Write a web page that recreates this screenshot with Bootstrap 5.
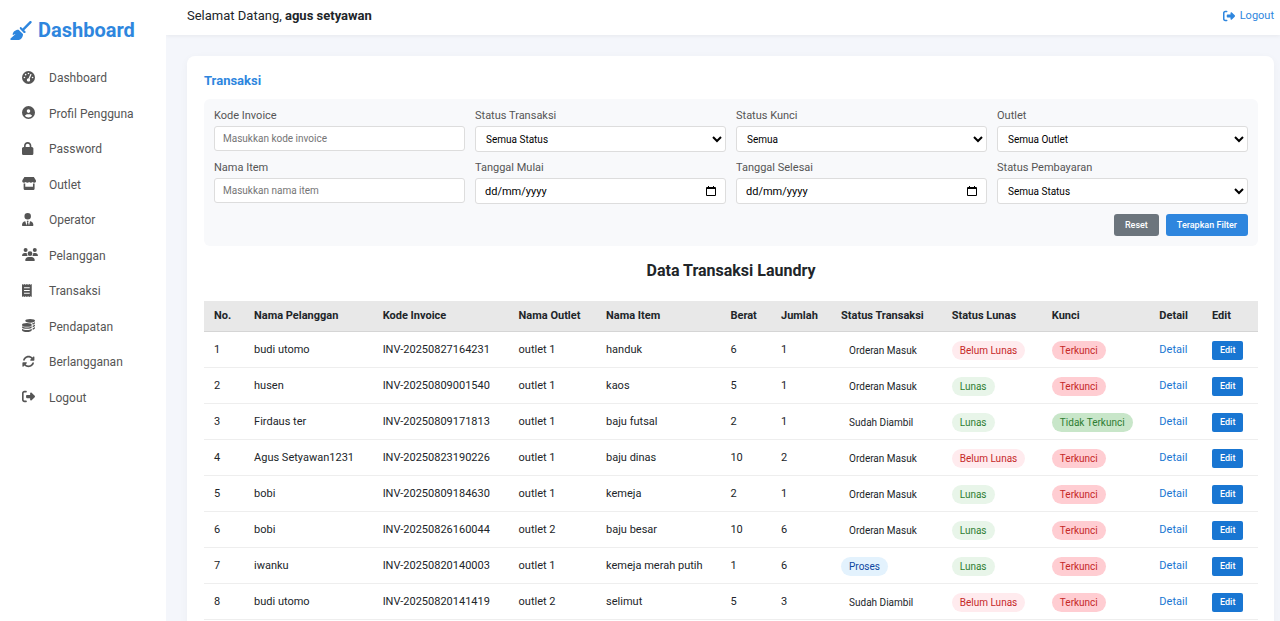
<!DOCTYPE html>
<html lang="id">
<head>
<meta charset="utf-8">
<meta name="viewport" content="width=device-width, initial-scale=1">
<title>Transaksi</title>
<link href="https://cdn.jsdelivr.net/npm/bootstrap@5.3.0/dist/css/bootstrap.min.css" rel="stylesheet">
<style>
body{font-family:Roboto,"Liberation Sans",sans-serif;font-size:12px;line-height:16px;color:#212529;background:#f4f6fb}
a{text-decoration:none}
svg{fill:currentColor}
.side-panel{width:166px;flex:none;background:#fff}
.brand-link{color:#2e86de;font-size:20px;line-height:28px;font-weight:700;padding:16px 10px 18px;gap:6px}
.side-nav{min-height:352px}
.side-link{color:#555;height:32px;padding-left:22px;gap:11px}
.side-icon{width:16px;height:13px;flex:none;overflow:visible;margin-bottom:2px}
.top-strip{height:35px;background:#fff;padding:0 6px 4px 21px;font-size:13px;box-shadow:0 1px 4px rgba(0,0,0,.06)}
.top-strip a{color:#2e86de;font-size:11px;gap:5px}
.panel-card{margin:21px 6px 0 21px;padding:16px 16px 16px 17px;background:#fff;border-radius:8px;box-shadow:0 2px 8px rgba(0,0,0,.04)}
.panel-title{color:#2e86de;font-size:13px;line-height:18px;font-weight:700;margin-bottom:9px}
.filter-box{background:#f8f9fb;border-radius:6px;padding:9px 10px 10px}
.filter-box label{display:block;color:#555;font-size:11px;line-height:16px;margin-bottom:2px}
.filter-row{--bs-gutter-x:10px;--bs-gutter-y:8px}
.filter-actions{margin-top:10px;gap:7px}
.field{display:block;width:100%;height:26px;border:1px solid #ddd;border-radius:3px;background:#fff;color:#000;font-size:10px;padding:0 8px}
.field-text{height:25px}
.field-select{padding:0 6px}
.field::placeholder{color:#757575}
.field-date::placeholder{color:#000}
.field-date{font-size:11px;padding:0 9px}
.date-icon{position:absolute;right:10px;top:8px;width:10px;height:10px;padding:0;border:0;background:none;line-height:0;color:#000}
.act-btn{height:22px;border:0;border-radius:3px;color:#fff;font-size:9px;line-height:12px;font-weight:500;padding:0 11px}
.act-grey{background:#6c757d}.act-blue{background:#2e86de}
.data-title{font-size:16px;line-height:24px;font-weight:700;margin:13px 0 18px;text-align:center}
.trx-table{width:100%;table-layout:fixed;white-space:nowrap;font-size:11px}
.trx-table th{background:#e8e8e8;height:30px;border-bottom:1px solid #d5d5d5;padding:0 10px;font-weight:700}
.trx-table td{height:36px;border-bottom:1px solid #eee;padding:2px 10px 0}
.trx-table a{color:#1976d2}
.pill{display:inline-block;height:19px;line-height:19px;border-radius:10px;padding:0 8px;font-size:10px;vertical-align:middle}
.pill-red{background:#ffebee;color:#c62828}.pill-green{background:#e8f5e9;color:#2e7d32}
.pill-blue{background:#e3f2fd;color:#0d47a1}.pill-lock{background:#ffcdd2;color:#c62828}.pill-open{background:#c8e6c9;color:#2e7d32}
.edit-btn{height:19px;border:0;border-radius:2px;background:#1976d2;color:#fff;font-size:9px;font-weight:500;line-height:12px;padding:0 8px;vertical-align:middle}
</style>
</head>
<body>
<svg class="d-none" xmlns="http://www.w3.org/2000/svg">
<symbol id="i-out" viewBox="0 0 512 512"><path d="M377.9 105.9L500.7 228.7c7.2 7.2 11.3 17.1 11.3 27.3s-4.1 20.1-11.3 27.3L377.9 406.1c-6.4 6.4-15 9.9-24 9.9c-18.7 0-33.9-15.2-33.9-33.9l0-62.1-128 0c-17.7 0-32-14.3-32-32l0-64c0-17.7 14.3-32 32-32l128 0 0-62.1c0-18.7 15.2-33.9 33.9-33.9c9 0 17.6 3.6 24 9.9zM160 96L96 96c-17.7 0-32 14.3-32 32l0 256c0 17.7 14.3 32 32 32l64 0c17.7 0 32 14.3 32 32s-14.3 32-32 32l-64 0c-53 0-96-43-96-96L0 128C0 75 43 32 96 32l64 0c17.7 0 32 14.3 32 32s-14.3 32-32 32z"/></symbol>
</svg>
<div class="d-flex min-vh-100">
<aside class="side-panel">
<a href="#" class="brand-link d-flex align-items-center"><svg width="22" height="19" viewBox="0 0 576 512"><path d="M566.6 54.6c12.5-12.5 12.5-32.8 0-45.3s-32.8-12.5-45.3 0l-192 192-34.7-34.7c-4.2-4.2-10-6.6-16-6.6c-12.5 0-22.6 10.1-22.6 22.6l0 29.1L364.3 320l29.1 0c12.5 0 22.6-10.1 22.6-22.6c0-6-2.4-11.8-6.6-16l-34.7-34.7 192-192zM341.1 353.4L222.6 234.9c-42.7-3.7-85.2 11.7-115.8 42.3l-8 8C76.5 307.5 64 337.7 64 369.2c0 6.8 7.1 11.2 13.2 8.2l51.1-25.5c5-2.5 9.5 4.1 5.4 7.9L7.3 473.4C2.7 477.6 0 483.6 0 489.9C0 502.1 9.9 512 22.1 512l173.3 0c38.8 0 75.9-15.4 103.4-42.8c30.6-30.6 45.9-73.1 42.3-115.8z"/></svg><span>Dashboard</span></a>
<nav class="side-nav d-flex flex-column justify-content-between" aria-label="Menu utama">
<a href="#" class="side-link d-flex align-items-center"><svg class="side-icon" viewBox="0 0 512 512" preserveAspectRatio="xMinYMid"><path fill-rule="evenodd" d="M0 256a256 256 0 1 1 512 0a256 256 0 1 1-512 0zm288-160a32 32 0 1 0-64 0a32 32 0 1 0 64 0zM256 416c35 0 64-29 64-64 0-17-7-33-18-45l69-158c6-12 0-26-12-31s-26 0-32 12l-69 158c-37 0-66 28-66 64s29 64 64 64zM176 144a32 32 0 1 0-64 0a32 32 0 1 0 64 0zM96 288a32 32 0 1 0 0-64a32 32 0 1 0 0 64zm352-32a32 32 0 1 0-64 0a32 32 0 1 0 64 0z"/></svg><span>Dashboard</span></a>
<a href="#" class="side-link d-flex align-items-center"><svg class="side-icon" viewBox="0 0 512 512" preserveAspectRatio="xMinYMid"><path d="M399 384.2C376.9 345.8 335.4 320 288 320l-64 0c-47.4 0-88.9 25.8-111 64.2c35.2 39.2 86.2 63.8 143 63.8s107.8-24.7 143-63.8zM0 256a256 256 0 1 1 512 0A256 256 0 1 1 0 256zm256 16a72 72 0 1 0 0-144 72 72 0 1 0 0 144z"/></svg><span>Profil Pengguna</span></a>
<a href="#" class="side-link d-flex align-items-center"><svg class="side-icon" viewBox="0 0 448 512" preserveAspectRatio="xMinYMid"><path d="M144 144l0 48 160 0 0-48c0-44.2-35.8-80-80-80s-80 35.8-80 80zM80 192l0-48C80 64.5 144.5 0 224 0s144 64.5 144 144l0 48 16 0c35.3 0 64 28.7 64 64l0 192c0 35.3-28.7 64-64 64L64 512c-35.3 0-64-28.7-64-64L0 256c0-35.3 28.7-64 64-64l16 0z"/></svg><span>Password</span></a>
<a href="#" class="side-link d-flex align-items-center"><svg class="side-icon" viewBox="0 0 560 512" preserveAspectRatio="xMinYMid"><path d="M110 0h340c12 0 22 6 28 16l62 98c30 50 0 112-55 112-28 0-52-12-68-32-34 42-96 42-136 0-34 42-102 42-136 0-16 20-42 32-68 32-56 0-88-62-56-112L82 16c6-10 16-16 28-16zM64 256c22 4 44 2 64-4v132h304V252c22 6 42 8 64 4v192c0 36-28 64-64 64H128c-36 0-64-28-64-64z"/></svg><span>Outlet</span></a>
<a href="#" class="side-link d-flex align-items-center"><svg class="side-icon" viewBox="0 0 448 512" preserveAspectRatio="xMinYMid"><path d="M96 128a128 128 0 1 0 256 0a128 128 0 1 0-256 0zM209 360l-20-33c-7-11 1-23 13-23h44c12 0 20 12 13 23l-20 33 36 135 40-158c2-9 11-15 20-12 66 17 113 76 113 146 0 24-15 41-35 41H35c-20 0-35-17-35-41 0-70 47-129 113-146 9-3 18 3 20 12l40 158z"/></svg><span>Operator</span></a>
<a href="#" class="side-link d-flex align-items-center"><svg class="side-icon" viewBox="0 0 640 512" preserveAspectRatio="xMinYMid"><path d="M144 0a80 80 0 1 1 0 160a80 80 0 1 1 0-160zm368 0a80 80 0 1 1 0 160a80 80 0 1 1 0-160zM0 299c0-59 48-107 107-107h42c16 0 31 4 45 10-8 44 8 88 41 118H21c-12 0-21-10-21-21zm405 21c33-30 49-74 41-118 14-6 29-10 45-10h42c59 0 107 48 107 107 0 11-9 21-21 21zM224 224a96 96 0 1 1 192 0a96 96 0 1 1-192 0zm-96 261c0-74 60-133 133-133h118c73 0 133 59 133 133 0 15-12 27-27 27H155c-15 0-27-12-27-27z"/></svg><span>Pelanggan</span></a>
<a href="#" class="side-link d-flex align-items-center"><svg class="side-icon" viewBox="0 0 384 512" preserveAspectRatio="xMinYMid"><path fill-rule="evenodd" d="M0 0l48 34L96 0l48 34L192 0l48 34L288 0l48 34L384 0V512l-48-34-48 34-48-34-48 34-48-34-48 34-48-34-48 34zM80 128v40h224v-40zM80 236v40h224v-40zM80 344v40h224v-40z"/></svg><span>Transaksi</span></a>
<a href="#" class="side-link d-flex align-items-center"><svg class="side-icon" viewBox="0 0 512 512" preserveAspectRatio="xMinYMid"><ellipse cx="320" cy="72" rx="192" ry="72"/><ellipse cx="192" cy="232" rx="192" ry="76"/><path d="M0 286c70 66 314 66 384 0v34c0 82-384 82-384 0zM0 384c70 66 314 66 384 0v48c0 106-384 106-384 0zM390 168c48-8 94-24 122-54v40c0 34-40 56-94 66-4-20-14-38-28-52zM420 264c36-8 70-22 92-44v36c0 34-40 56-92 66zM420 362c36-8 70-22 92-44v36c0 34-40 56-92 66z"/></svg><span>Pendapatan</span></a>
<a href="#" class="side-link d-flex align-items-center"><svg class="side-icon" viewBox="0 0 512 512" preserveAspectRatio="xMinYMid"><path d="M142.9 142.9c62.2-62.2 162.7-62.5 225.3-1L327 183c-6.9 6.9-8.9 17.2-5.2 26.2s12.5 14.8 22.2 14.8l120 0c13.3 0 24-10.7 24-24l0-120c0-9.7-5.8-18.5-14.8-22.2s-19.3-1.7-26.2 5.2L413.4 96.6c-87.6-86.5-228.7-86.2-315.8 1C73.2 122 55.6 150.7 44.8 181.4c-5.9 16.7 2.9 34.9 19.5 40.8s34.9-2.9 40.8-19.5c7.7-21.8 20.2-42.3 37.8-59.8zM16 312L16 440c0 9.7 5.8 18.5 14.8 22.2s19.3 1.7 26.2-5.2l41.6-41.6c87.6 86.5 228.7 86.2 315.8-1c24.4-24.4 42.1-53.1 52.9-83.8c5.9-16.7-2.9-34.9-19.5-40.8s-34.9 2.9-40.8 19.5c-7.7 21.8-20.2 42.3-37.8 59.8c-62.2 62.2-162.7 62.5-225.3 1L185 329c6.9-6.9 8.9-17.2 5.2-26.2s-12.5-14.8-22.2-14.8L40 288c-13.3 0-24 10.7-24 24z"/></svg><span>Berlangganan</span></a>
<a href="#" class="side-link d-flex align-items-center"><svg class="side-icon" viewBox="0 0 512 512" preserveAspectRatio="xMinYMid"><use href="#i-out" width="512" height="512"/></svg><span>Logout</span></a>
</nav>
</aside>
<div class="flex-grow-1 overflow-hidden">
<header class="top-strip d-flex justify-content-between align-items-center"><div>Selamat Datang, <strong>agus setyawan</strong></div><a href="#" class="d-flex align-items-center"><svg width="12" height="12"><use href="#i-out"/></svg>Logout</a></header>
<main class="panel-card">
<h1 class="panel-title">Transaksi</h1>
<form class="filter-box">
<div class="row row-cols-4 filter-row">
<div><label for="kode">Kode Invoice</label><input id="kode" type="text" class="field field-text" placeholder="Masukkan kode invoice"></div>
<div><label for="st">Status Transaksi</label><select id="st" class="field field-select"><option>Semua Status</option></select></div>
<div><label for="sk">Status Kunci</label><select id="sk" class="field field-select"><option>Semua</option></select></div>
<div><label for="ou">Outlet</label><select id="ou" class="field field-select"><option>Semua Outlet</option></select></div>
<div><label for="ni">Nama Item</label><input id="ni" type="text" class="field field-text" placeholder="Masukkan nama item"></div>
<div><label for="tm">Tanggal Mulai</label><div class="position-relative"><input id="tm" type="text" inputmode="numeric" class="field field-date" placeholder="dd/mm/yyyy"><button type="button" class="date-icon" aria-label="Pilih tanggal mulai"><svg width="10" height="10" viewBox="0 0 10 10"><path fill-rule="evenodd" d="M1 1h1V0h1v1h4V0h1v1h1q1 0 1 1v7q0 1-1 1H1q-1 0-1-1V2q0-1 1-1zM1 3v6h8V3z"/></svg></button></div></div>
<div><label for="ts">Tanggal Selesai</label><div class="position-relative"><input id="ts" type="text" inputmode="numeric" class="field field-date" placeholder="dd/mm/yyyy"><button type="button" class="date-icon" aria-label="Pilih tanggal selesai"><svg width="10" height="10" viewBox="0 0 10 10"><path fill-rule="evenodd" d="M1 1h1V0h1v1h4V0h1v1h1q1 0 1 1v7q0 1-1 1H1q-1 0-1-1V2q0-1 1-1zM1 3v6h8V3z"/></svg></button></div></div>
<div><label for="sp">Status Pembayaran</label><select id="sp" class="field field-select"><option>Semua Status</option></select></div>
</div>
<div class="filter-actions d-flex justify-content-end"><button type="reset" class="act-btn act-grey">Reset</button><button type="submit" class="act-btn act-blue">Terapkan Filter</button></div>
</form>
<h2 class="data-title">Data Transaksi Laundry</h2>
<table class="trx-table">
<colgroup><col style="width:3.8%"><col style="width:12.2%"><col style="width:12.9%"><col style="width:8.3%"><col style="width:11.8%"><col style="width:4.8%"><col style="width:5.7%"><col style="width:10.5%"><col style="width:9.5%"><col style="width:10.2%"><col style="width:5%"><col style="width:5.3%"></colgroup>
<thead><tr><th>No.</th><th>Nama Pelanggan</th><th>Kode Invoice</th><th>Nama Outlet</th><th>Nama Item</th><th>Berat</th><th>Jumlah</th><th>Status Transaksi</th><th>Status Lunas</th><th>Kunci</th><th>Detail</th><th>Edit</th></tr></thead>
<tbody>
<tr><td>1</td><td>budi utomo</td><td>INV-20250827164231</td><td>outlet 1</td><td>handuk</td><td>6</td><td>1</td><td><span class="pill">Orderan Masuk</span></td><td><span class="pill pill-red">Belum Lunas</span></td><td><span class="pill pill-lock">Terkunci</span></td><td><a href="#">Detail</a></td><td><button class="edit-btn">Edit</button></td></tr>
<tr><td>2</td><td>husen</td><td>INV-20250809001540</td><td>outlet 1</td><td>kaos</td><td>5</td><td>1</td><td><span class="pill">Orderan Masuk</span></td><td><span class="pill pill-green">Lunas</span></td><td><span class="pill pill-lock">Terkunci</span></td><td><a href="#">Detail</a></td><td><button class="edit-btn">Edit</button></td></tr>
<tr><td>3</td><td>Firdaus ter</td><td>INV-20250809171813</td><td>outlet 1</td><td>baju futsal</td><td>2</td><td>1</td><td><span class="pill">Sudah Diambil</span></td><td><span class="pill pill-green">Lunas</span></td><td><span class="pill pill-open">Tidak Terkunci</span></td><td><a href="#">Detail</a></td><td><button class="edit-btn">Edit</button></td></tr>
<tr><td>4</td><td>Agus Setyawan1231</td><td>INV-20250823190226</td><td>outlet 1</td><td>baju dinas</td><td>10</td><td>2</td><td><span class="pill">Orderan Masuk</span></td><td><span class="pill pill-red">Belum Lunas</span></td><td><span class="pill pill-lock">Terkunci</span></td><td><a href="#">Detail</a></td><td><button class="edit-btn">Edit</button></td></tr>
<tr><td>5</td><td>bobi</td><td>INV-20250809184630</td><td>outlet 1</td><td>kemeja</td><td>2</td><td>1</td><td><span class="pill">Orderan Masuk</span></td><td><span class="pill pill-green">Lunas</span></td><td><span class="pill pill-lock">Terkunci</span></td><td><a href="#">Detail</a></td><td><button class="edit-btn">Edit</button></td></tr>
<tr><td>6</td><td>bobi</td><td>INV-20250826160044</td><td>outlet 2</td><td>baju besar</td><td>10</td><td>6</td><td><span class="pill">Orderan Masuk</span></td><td><span class="pill pill-green">Lunas</span></td><td><span class="pill pill-lock">Terkunci</span></td><td><a href="#">Detail</a></td><td><button class="edit-btn">Edit</button></td></tr>
<tr><td>7</td><td>iwanku</td><td>INV-20250820140003</td><td>outlet 1</td><td>kemeja merah putih</td><td>1</td><td>6</td><td><span class="pill pill-blue">Proses</span></td><td><span class="pill pill-green">Lunas</span></td><td><span class="pill pill-lock">Terkunci</span></td><td><a href="#">Detail</a></td><td><button class="edit-btn">Edit</button></td></tr>
<tr><td>8</td><td>budi utomo</td><td>INV-20250820141419</td><td>outlet 2</td><td>selimut</td><td>5</td><td>3</td><td><span class="pill">Sudah Diambil</span></td><td><span class="pill pill-red">Belum Lunas</span></td><td><span class="pill pill-lock">Terkunci</span></td><td><a href="#">Detail</a></td><td><button class="edit-btn">Edit</button></td></tr>
</tbody>
</table>
</main>
</div>
</div>
<script src="https://cdn.jsdelivr.net/npm/bootstrap@5.3.0/dist/js/bootstrap.bundle.min.js"></script>
</body>
</html>
